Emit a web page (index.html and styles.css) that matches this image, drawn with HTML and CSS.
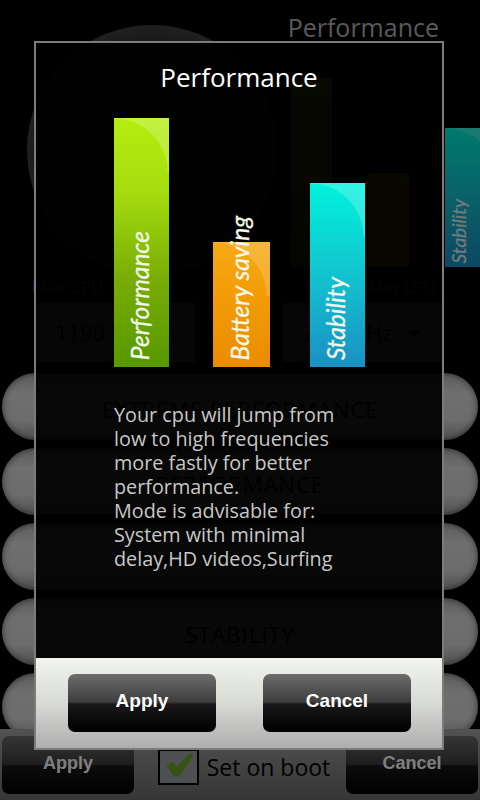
FILE: index.html
```html
<!DOCTYPE html>
<html lang="en">
<head>
<meta charset="utf-8">
<title>Performance</title>
<link rel="stylesheet" href="styles.css">
</head>
<body>
<div class="screen">
  <div class="top">
    <div class="gauge">
      <div class="gauge-ring"></div>
      <svg class="needle" viewBox="0 0 250 245"><path d="M85 82 L186 184" stroke="#000" stroke-width="3"/></svg>
      <span class="gauge-value">700 Mhz</span>
    </div>
    <div class="side">
      <div class="app-title">Performance</div>
      <div class="mini-bars">
        <div class="mini mini-perf bar-green"></div>
        <div class="mini mini-batt bar-orange"></div>
        <div class="mini mini-stab bar-teal"><span class="mini-label">Stability</span></div>
      </div>
    </div>
  </div>
  <div class="labels"><span>Max CPU</span><span>Min CPU</span></div>
  <div class="selects">
    <div class="select">1190 MHz</div>
    <div class="select">245 MHz<span class="arrow"></span></div>
  </div>
  <div class="rows">
    <div class="row">EXTREME PERFORMANCE</div>
    <div class="row">PERFORMANCE</div>
    <div class="row">BATTERY SAVING</div>
    <div class="row">STABILITY</div>
    <div class="row"></div>
  </div>
  <div class="bottom">
    <button class="btn btn-small">Apply</button>
    <div class="boot">
      <span class="check"><svg viewBox="0 0 37 32" width="37" height="32"><path d="M7 15 L12 11 L17 16 L30 2 L33 5 L19 25 L14 25 Z" fill="#6fa52a" stroke="#6fa52a" stroke-width="1" stroke-linejoin="round"/></svg></span>
      <span class="boot-text">Set on boot</span>
    </div>
    <button class="btn btn-small">Cancel</button>
  </div>

  <div class="scrim">
    <div class="dialog">
      <div class="dialog-title">Performance</div>
      <div class="chart">
        <div class="bar bar-green bar-p"><span class="bar-label">Performance</span></div>
        <div class="bar bar-orange bar-b"><span class="bar-label">Battery saving</span></div>
        <div class="bar bar-teal bar-s"><span class="bar-label">Stability</span></div>
      </div>
      <p class="desc">Your cpu will jump from<br>low to high frequencies<br>more fastly for better<br>performance.<br>Mode is advisable for:<br>System with minimal<br>delay,HD videos,Surfing</p>
      <div class="panel">
        <button class="btn btn-large">Apply</button>
        <button class="btn btn-large">Cancel</button>
      </div>
    </div>
  </div>
</div>
</body>
</html>
```
FILE: styles.css
```css
* { box-sizing: border-box; }
html, body { margin: 0; padding: 0; background: #000; }
.screen {
  position: relative;
  width: 480px;
  height: 800px;
  overflow: hidden;
  background: #000;
  display: flex;
  flex-direction: column;
  font-family: "Open Sans", "DejaVu Sans", sans-serif;
}

/* background app */
.top { display: flex; height: 275px; padding-left: 27px; flex: none; }
.gauge {
  position: relative;
  flex: none;
  width: 250px;
  height: 250px;
  margin-top: 25px;
  border-radius: 50%;
  background: radial-gradient(circle at 50% 50%, #2a2a2a 0, #333 60%, #555 90%, #5a5a5a 100%);
  display: flex;
  align-items: flex-end;
  justify-content: center;
  padding-bottom: 30px;
}
.gauge-ring { position: absolute; inset: 20px; border-radius: 50%; border: 8px solid #1b1b1b; }
.needle { position: absolute; inset: 0; width: 250px; height: 250px; }
.gauge-value { position: relative; font-size: 26px; color: #000; }
.side { flex: 1; min-width: 0; display: flex; flex-direction: column; }
.app-title {
  height: 53px;
  padding: 8px 41px 0 0;
  text-align: right;
  font-size: 25px;
  line-height: 38px;
  color: #b4b4b4;
}
.mini-bars { display: flex; align-items: flex-end; height: 214px; gap: 36px; padding-left: 14px; }
.mini { flex: none; width: 41px; display: flex; justify-content: center; align-items: flex-end; }
.mini-perf { height: 189px; }
.mini-batt { height: 94px; }
.mini-stab { height: 139px; width: 35px; }
.mini-label {
  writing-mode: vertical-rl;
  transform: rotate(180deg);
  font: italic 19px "Lato", "Open Sans", sans-serif;
  -webkit-text-stroke: .2px currentColor;
  color: #e6f4f4;
  padding-top: 4px;
  margin-right: 8px;
}

.labels { display: flex; justify-content: space-between; height: 28px; padding: 0 44px 0 32px; font-size: 17px; line-height: 24px; color: #999; flex: none; }
.selects { display: flex; justify-content: space-between; height: 59px; padding: 0 37px 0 35px; flex: none; }
.select {
  position: relative;
  width: 160px;
  padding-left: 20px;
  background: #a8a8a8;
  font-size: 22px;
  line-height: 59px;
  color: #000;
}
.arrow {
  position: absolute;
  right: 22px;
  top: 27px;
  border-left: 7px solid transparent;
  border-right: 7px solid transparent;
  border-top: 7px solid #000;
}

.rows { display: flex; flex-direction: column; gap: 8px; height: 367px; padding: 11px 2px 0; overflow: hidden; flex: none; }
.row {
  flex: none;
  height: 67px;
  border-radius: 34px;
  background: linear-gradient(#b8b8b8 0, #dedede 30%, #d8d8d8 70%, #a0a0a0 100%);
  box-shadow: inset 0 0 7px rgba(0, 0, 0, .55);
  text-align: center;
  font-size: 22px;
  letter-spacing: 1px;
  line-height: 72px;
  color: #000;
}

.bottom {
  flex: 1;
  display: flex;
  align-items: flex-start;
  justify-content: space-between;
  padding: 7px 2px 0;
  background: linear-gradient(#a4a4a4, #6c6c6c);
}
.btn {
  border: 0;
  padding: 0 0 4px;
  font: bold 19px "Liberation Sans", Arial, sans-serif;
  color: #fff;
  border-radius: 7px;
  background: linear-gradient(#6c6c6c 0, #3e3e3e 48%, #1a181a 52%, #000 100%);
}
.btn-small { width: 132px; height: 58px; font-size: 18px; }
.boot { display: flex; align-items: center; gap: 8px; height: 50px; margin: 6px 0 0 8px; }
.check {
  width: 41px;
  height: 36px;
  border: 2px solid #000;
  background: #9ea0a8;
  display: flex;
  align-items: center;
  justify-content: center;
}
.check svg { display: block; }
.boot-text { font-size: 23px; color: #000; }

/* dialog */
.scrim { position: absolute; inset: 0; background: rgba(0, 0, 0, .5); }
.dialog {
  position: absolute;
  left: 34px;
  top: 41px;
  width: 410px;
  height: 709px;
  border: 2px solid #7c7c7c;
  background: rgba(0, 0, 0, .925);
  display: flex;
  flex-direction: column;
}
.dialog-title { height: 70px; text-align: center; font-size: 26px; line-height: 68px; color: #fff; flex: none; }
.chart { display: flex; align-items: flex-end; height: 254px; padding-left: 78px; flex: none; }
.bar {
  flex: none;
  width: 55px;
  display: flex;
  align-items: flex-end;
  justify-content: center;
}
.bar-p { height: 249px; }
.bar-b { height: 125px; width: 57px; margin-left: 44px; }
.bar-s { height: 184px; margin-left: 40px; }
.bar-green {
  background:
    radial-gradient(circle 54px at 0 54px, transparent 53px, rgba(255, 255, 255, .2) 54px) 0 0 / 100% 54px no-repeat,
    linear-gradient(#b4ee10 0, #a4dc0e 30%, #78ac06 65%, #569800 100%);
}
.bar-orange {
  background:
    radial-gradient(circle 54px at 0 54px, transparent 53px, rgba(255, 255, 255, .16) 54px) 0 0 / 100% 54px no-repeat,
    linear-gradient(#f6aa14 0, #f29a06 50%, #ea8c00 100%);
}
.bar-teal {
  background:
    radial-gradient(circle 54px at 0 54px, transparent 53px, rgba(255, 255, 255, .2) 54px) 0 0 / 100% 54px no-repeat,
    linear-gradient(#00f2dc 0, #12c8d0 45%, #1a90c4 100%);
}
.bar-label {
  writing-mode: vertical-rl;
  transform: rotate(180deg);
  white-space: nowrap;
  font: italic 24.5px "Lato", "Open Sans", sans-serif;
  -webkit-text-stroke: .3px currentColor;
  color: #f2f8ea;
  padding-top: 7px;
  margin-right: 4px;
  line-height: 32px;
}
.desc {
  margin: 36px 0 0;
  padding-left: 78px;
  font-size: 19.8px;
  line-height: 24px;
  color: #c8c8c8;
  flex: none;
}
.panel {
  margin-top: auto;
  height: 90px;
  padding: 16px 31px 0 32px;
  display: flex;
  justify-content: space-between;
  align-items: flex-start;
  background: linear-gradient(#f2f4f0 0, #d8dad6 50%, #aeaeae 100%);
  flex: none;
}
.btn-large { width: 148px; height: 58px; }
```
